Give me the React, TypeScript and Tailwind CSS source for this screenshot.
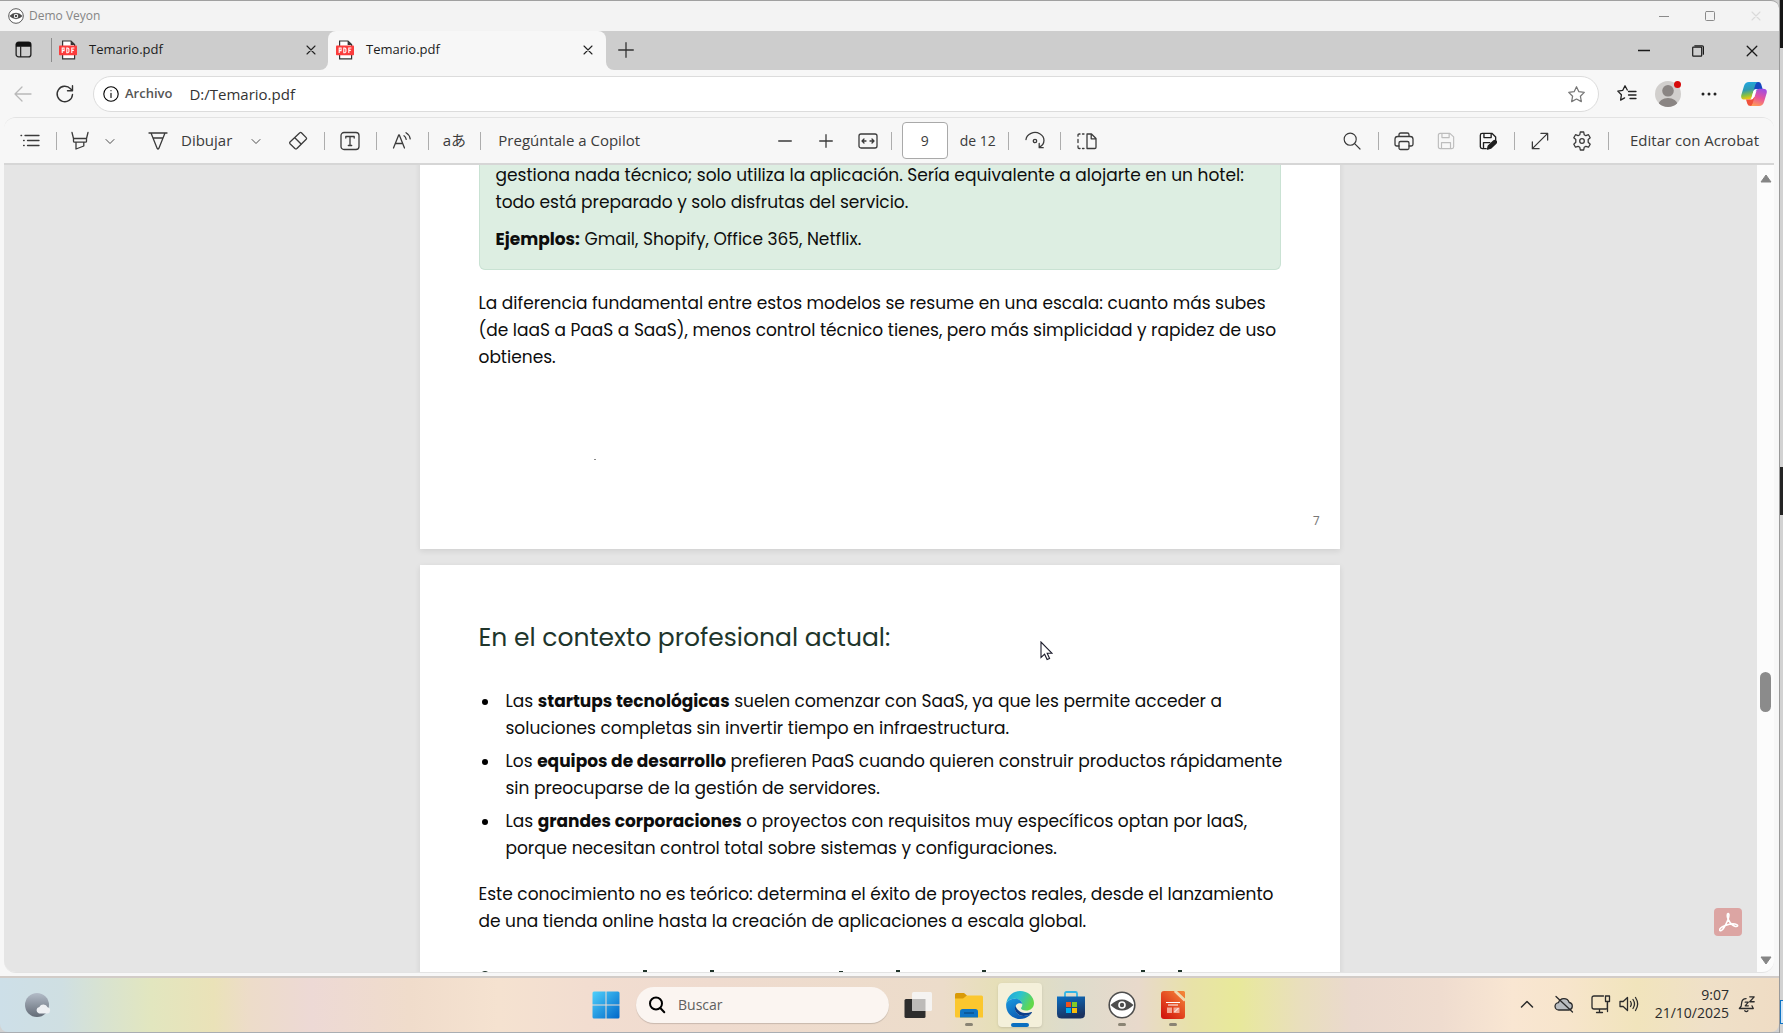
import type { ReactNode } from "react";

const strokeProps = {
  fill: "none",
  stroke: "currentColor",
  strokeLinecap: "round" as const,
  strokeLinejoin: "round" as const,
};

type IconProps = { children: ReactNode; size?: string; box?: string; width?: number };

function Icon({ children, size = "size-5", box = "0 0 20 20", width = 1.3 }: IconProps) {
  return (
    <svg viewBox={box} className={`${size} shrink-0`} strokeWidth={width} {...strokeProps} aria-hidden="true">
      {children}
    </svg>
  );
}

type ButtonProps = { label: string; children: ReactNode; className?: string; disabled?: boolean };

function IconButton({ label, children, className = "w-8", disabled }: ButtonProps) {
  return (
    <button
      type="button"
      aria-label={label}
      disabled={disabled}
      className={`flex h-8 shrink-0 items-center justify-center rounded ${className}`}
    >
      {children}
    </button>
  );
}

function Divider() {
  return (
    <span className="flex w-5 shrink-0 justify-center">
      <span className="h-[18px] w-px bg-[#adadad]" />
    </span>
  );
}

function EyeLogo({ size }: { size: string }) {
  return (
    <svg viewBox="0 0 28 28" className={size} aria-hidden="true">
      <circle cx="14" cy="14" r="12.8" fill="#fff" stroke="#4d4d4d" strokeWidth="1.6" />
      <path d="M2.5 14Q8 8.4 14 8.4T25.5 14Q20 19.6 14 19.6T2.5 14Z" fill="#4d4d4d" />
      <circle cx="14" cy="14" r="3.8" fill="#fff" />
      <circle cx="14" cy="14" r="2.2" fill="#4d4d4d" />
    </svg>
  );
}

function PdfIcon() {
  return (
    <svg viewBox="0 0 18 20" className="h-5 w-[18px] shrink-0" aria-hidden="true">
      <path d="M3.6 1H12l3.6 3.6V18.8H3.6Z" fill="#fff" stroke="#333" strokeWidth="1.2" />
      <path d="M11.6 1v4h4Z" fill="#333" />
      <rect x="0" y="5.6" width="18" height="9.6" rx=".8" fill="#fb3d3d" />
      <path
        d="M3.2 13V8h1.9v2.6H3.2M7.8 8v4.8h1.1l1-1V9l-1-1ZM12.8 13V8h2.6M12.8 10.4h2"
        fill="none"
        stroke="#fff"
        strokeWidth="1.1"
      />
    </svg>
  );
}

function CloseMark({ size = "size-3" }: { size?: string }) {
  return (
    <Icon size={size} box="0 0 12 12" width={1.3}>
      <path d="M1.2 1.2l9.6 9.6M10.8 1.2l-9.6 9.6" />
    </Icon>
  );
}

function Chevron() {
  return (
    <Icon size="size-2.5" box="0 0 10 10" width={0.9}>
      <path d="M1 3.500l4 4 4-4" />
    </Icon>
  );
}

function TitleBar() {
  return (
    <header className="flex h-[31px] shrink-0 items-center rounded-tr-lg border-t border-[#a0a0a0] bg-[#f3f3f3] pl-2">
      <EyeLogo size="size-4" />
      <span className="ml-[5px] text-xs text-[#858585]">Demo Veyon</span>
      <div className="ml-auto flex text-[#8a8a8a]">
        <IconButton label="Minimizar ventana" className="w-[46px]">
          <Icon size="size-2.5" box="0 0 10 10" width={1}><path d="M0 5.5h10" /></Icon>
        </IconButton>
        <IconButton label="Maximizar ventana" className="w-[46px]">
          <Icon size="size-2.5" box="0 0 10 10" width={1}><rect x=".5" y=".5" width="9" height="9" rx="1" /></Icon>
        </IconButton>
        <IconButton label="Cerrar ventana" className="w-[46px] text-[#dadada]">
          <CloseMark size="size-2.5" />
        </IconButton>
      </div>
    </header>
  );
}

function TabStrip() {
  return (
    <nav className="flex h-[39px] shrink-0 bg-[#f7f7f7]">
      <div className="flex w-[328px] shrink-0 items-center rounded-br-lg bg-[#cdcdcd] pb-0.5 pl-[7px]">
        <IconButton label="Menú de pestañas">
          <svg viewBox="0 0 18 18" className="size-[17px]" aria-hidden="true">
            <rect x="1.2" y="1.2" width="15.6" height="15.6" rx="2.6" fill="none" stroke="#222" strokeWidth="1.4" />
            <path d="M1 6V4a3 3 0 0 1 3-3h10a3 3 0 0 1 3 3v2Z" fill="#111" />
            <path d="M6 5v12" stroke="#222" strokeWidth="1.3" />
          </svg>
        </IconButton>
        <span className="ml-3 h-6 w-px bg-[#8c8c8c]" />
        <span className="ml-[7px]" />
        <PdfIcon />
        <span className="ml-3 text-[13px] text-[#1c1c1c]">Temario.pdf</span>
        <IconButton label="Cerrar pestaña" className="ml-auto w-[34px] text-[#222]">
          <CloseMark size="size-2.5" />
        </IconButton>
      </div>
      <div className="flex min-w-0 flex-1 bg-[#cdcdcd]">
        <div className="flex w-[278px] shrink-0 items-center rounded-t-lg bg-[#f7f7f7] pb-0.5 pl-2">
          <PdfIcon />
          <span className="ml-3 text-[13px] text-[#1c1c1c]">Temario.pdf</span>
          <IconButton label="Cerrar pestaña" className="ml-auto w-[37px] text-[#222]">
            <CloseMark size="size-2.5" />
          </IconButton>
        </div>
        <div className="flex flex-1 items-center bg-[#f7f7f7]">
          <div className="flex h-full flex-1 items-center rounded-bl-lg bg-[#cdcdcd] pl-1">
            <IconButton label="Nueva pestaña" className="mb-0.5 w-8 text-[#333]">
              <Icon size="size-4" box="0 0 16 16" width={1.3}><path d="M8 .7v14.6M.7 8h14.6" /></Icon>
            </IconButton>
            <div className="ml-auto flex text-[#1a1a1a]">
              <IconButton label="Minimizar" className="w-[54px]">
                <Icon size="size-3" box="0 0 12 12" width={1.3}><path d="M0 5.500h12" /></Icon>
              </IconButton>
              <IconButton label="Restaurar" className="w-[54px]">
                <Icon size="size-3" box="0 0 12 12" width={1.2}>
                  <rect x=".7" y="2.2" width="9" height="9" rx=".6" />
                  <path d="M2.8.8h7.4q1.2 0 1.2 1.2v7.2" />
                </Icon>
              </IconButton>
              <IconButton label="Cerrar" className="w-[54px]"><CloseMark /></IconButton>
            </div>
          </div>
        </div>
      </div>
    </nav>
  );
}

function CopilotLogo() {
  return (
    <svg viewBox="0 0 26 24" className="h-6 w-[26px]" aria-hidden="true">
      <defs>
        <linearGradient id="cpa" x1="0" y1="0" x2=".2" y2="1">
          <stop offset="0" stopColor="#1ea7e8" /><stop offset=".5" stopColor="#2f9bb0" />
          <stop offset=".8" stopColor="#8fc23c" /><stop offset="1" stopColor="#f2c414" />
        </linearGradient>
        <linearGradient id="cpb" x1=".6" y1="0" x2=".3" y2="1">
          <stop offset="0" stopColor="#a24de0" /><stop offset=".5" stopColor="#e8549a" /><stop offset="1" stopColor="#ff9a56" />
        </linearGradient>
      </defs>
      <path d="M15 0h2.500q2 0 2.700 2.300l1.400 4.700h-3.600q-2.200 0-2.900 2.200L11 9Z" fill="#1547c0" />
      <path d="M8 0h9q-1.800 0-2.600 2.600L10.600 15.400Q9.800 17.600 7.600 17.600H3.800Q-.6 17.600.3 13L3 4Q4.200 0 8 0Z" fill="url(#cpa)" />
      <path d="M11 24H9.500q-2.500-.1-3.200-2.300L5 17.600h3q2.200 0 2.900-2.200L15 15Z" fill="#f0523c" />
      <path d="M18 24H9q1.800 0 2.600-2.600L15.400 9q.8-2.200 3-2.200h3.800Q26.600 6.800 25.700 11L23 20q-1.200 4-5 4Z" fill="url(#cpb)" />
      <path d="M12.600 8.600q.6-1.600 2.300-1.700h1.600q-1.100.5-1.600 2.100l-2.200 6.800q-.6 1.600-2.300 1.700H9q1-.4 1.600-2.100Z" fill="#fff" />
    </svg>
  );
}

const starPath = "M10 1.800l2.500 5.200 5.700.8-4.100 4 1 5.700L10 14.800l-5.100 2.700 1-5.700-4.100-4 5.700-.8Z";

function AddressRow() {
  return (
    <div className="flex h-[47px] shrink-0 items-center bg-[#f7f7f7] pt-px pl-[7px]">
      <IconButton label="Atrás" disabled className="w-8 text-[#b9b9b9]">
        <Icon size="size-[18px]" box="0 0 18 18"><path d="M17 9H1M8 2L1 9l7 7" /></Icon>
      </IconButton>
      <IconButton label="Actualizar" className="ml-2.5 w-8 text-[#333]">
        <Icon size="size-5" width={1.4}><path d="M17.500 10.500A7.700 7.700 0 1 1 15.500 4.800L17.400 6.700M17.500 1.800v5h-5" /></Icon>
      </IconButton>
      <div className="ml-3 flex h-9 flex-1 items-center rounded-full border border-[#dcdcdc] bg-white pl-[9px]">
        <Icon size="size-4" box="0 0 16 16" width={1.1}><circle cx="8" cy="8" r="7.200" /><path d="M8 7.200v4.200M8 4.600v.2" /></Icon>
        <label htmlFor="address" className="ml-1.5 text-[13px] font-semibold text-[#555]">Archivo</label>
        <input
          id="address"
          defaultValue="D:/Temario.pdf"
          className="ml-[17px] min-w-0 flex-1 bg-transparent text-[15px] text-[#333] outline-none"
        />
        <IconButton label="Agregar a favoritos" className="mr-1.5 w-8 text-[#777]">
          <Icon size="size-[19px]" width={1.3}><path d={starPath} /></Icon>
        </IconButton>
      </div>
      <IconButton label="Favoritos" className="ml-3 w-8 text-[#222]">
        <Icon size="size-5" width={1.3}>
          <path d="M10.300 6L8 1.700 5.800 6.300.8 7.100l3.600 3.700-.8 5.300 4-2.200M11.500 7.500H19M11.500 11H19M13 14.500h6" />
        </Icon>
      </IconButton>
      <button type="button" aria-label="Perfil" className="relative ml-3 size-[26px] shrink-0 overflow-visible">
        <svg viewBox="0 0 26 26" className="size-full" aria-hidden="true">
          <clipPath id="avatarClip"><circle cx="13" cy="13" r="13" /></clipPath>
          <g clipPath="url(#avatarClip)">
            <rect width="26" height="26" fill="#d1cfcd" />
            <circle cx="13" cy="9.800" r="5.800" fill="#8a8583" />
            <ellipse cx="13" cy="23.500" rx="9.500" ry="6.500" fill="#8a8583" />
          </g>
        </svg>
        <span className="absolute top-0 right-0 size-[7px] rounded-full bg-[#d70a0a]" />
      </button>
      <IconButton label="Configuración y más" className="ml-3 w-8 text-[#222]">
        <svg viewBox="0 0 16 4" className="h-1 w-4" fill="currentColor" aria-hidden="true">
          <circle cx="2" cy="2" r="1.500" /><circle cx="8" cy="2" r="1.500" /><circle cx="14" cy="2" r="1.500" />
        </svg>
      </IconButton>
      <IconButton label="Copilot" className="mr-[9px] ml-[13px] w-8"><CopilotLogo /></IconButton>
    </div>
  );
}

function PdfToolbar() {
  return (
    <div className="flex h-[47px] shrink-0 items-center border-b-2 border-[#d6d6d6] bg-[#f7f7f7] pr-[15px] pl-2.5 text-[15px] text-[#3b3b3b]">
      <IconButton label="Índice">
        <Icon size="size-5"><path d="M5 4.500h14M7.500 9.500H19M7.500 14.500H19M1 4.500h.6M3.600 9.500h.6M3.600 14.500h.6" /></Icon>
      </IconButton>
      <Divider />
      <IconButton label="Resaltar" className="w-7">
        <Icon size="size-5"><path d="M2 1.500l1.500 6v2.700q0 1 1 1h11q1 0 1-1V7.500l1.500-6M3.500 7.500h13M6 11.200v6.800l7.800-3v-3.800" /></Icon>
      </IconButton>
      <IconButton label="Opciones de resaltado"><Chevron /></IconButton>
      <button type="button" className="ml-[22px] flex items-center gap-[13px]">
        <Icon size="size-5"><path d="M1 2h18M3 2l6.200 15.400q.8 1.200 1.600 0L17 2M5 7h10" /></Icon>
        <span>Dibujar</span>
      </button>
      <IconButton label="Opciones de dibujo" className="ml-2 w-8"><Chevron /></IconButton>
      <IconButton label="Borrar" className="ml-2.5 w-8">
        <Icon size="size-5"><path d="M11.800 1.800q.8-.8 1.600 0l4.800 4.800q.8.800 0 1.600l-9.300 9.300q-1 .8-2 0L2 12.800q-.8-.9 0-1.800ZM6.800 6.800l6.500 6.500" /></Icon>
      </IconButton>
      <Divider />
      <IconButton label="Agregar texto">
        <Icon size="size-5"><rect x="1" y="1.500" width="18" height="17" rx="3" /><path d="M5.800 7V5.500h8.400V7M10 5.500v9M8.300 14.500h3.400" /></Icon>
      </IconButton>
      <Divider />
      <IconButton label="Leer en voz alta">
        <Icon size="size-5"><path d="M1.500 17L6.700 4h.6l5.200 13M3.300 12.500h7.400M12 4.800q1.800 1.200 2.200 3.500M14 1.800q3.500 2 4.200 6" /></Icon>
      </IconButton>
      <Divider />
      <button type="button" className="w-8 shrink-0 font-['Open_Sans','Noto_Sans_CJK_JP',sans-serif] text-[15px]">aあ</button>
      <Divider />
      <button type="button" className="ml-2 whitespace-nowrap">Pregúntale a Copilot</button>
      <span className="grow" />
      <IconButton label="Alejar" className="ml-3 w-8"><Icon size="size-3.5" box="0 0 14 14"><path d="M.7 7h12.600" /></Icon></IconButton>
      <IconButton label="Acercar" className="ml-[9px] w-8"><Icon size="size-3.5" box="0 0 14 14"><path d="M.7 7h12.600M7 .7v12.600" /></Icon></IconButton>
      <IconButton label="Ajustar al ancho" className="ml-3 w-7">
        <Icon size="size-5"><rect x="1" y="3" width="18" height="14" rx="2" /><path d="M8 10H4.300M6 8l-2 2 2 2M12 10h3.700M14 8l2 2-2 2" /></Icon>
      </IconButton>
      <Divider />
      <input
        aria-label="Número de página"
        defaultValue="9"
        className="h-[37px] w-[46px] rounded-sm border border-[#a9a9a9] bg-white text-center text-sm outline-none"
      />
      <span className="ml-3 text-sm">de 12</span>
      <span className="ml-[3px]" />
      <Divider />
      <IconButton label="Girar">
        <Icon size="size-5"><path d="M1 8.500A9 7.800 0 1 1 14.600 16M14.200 12.500v4.200h4" /><circle cx="10" cy="10" r="1.700" /></Icon>
      </IconButton>
      <Divider />
      <IconButton label="Vista de página">
        <Icon size="size-5"><path d="M10 3h4.500L19 7.500v8.800q0 1.200-1.200 1.200H10ZM14.200 3v4.800H19M7 3H5.500M3 3H2.200Q1 3 1 4.200v1M1 8.500v3M1 14.800v1.500q0 1.200 1.200 1.200H3M5.500 17.500H7" /></Icon>
      </IconButton>
      <span className="grow-[2]" />
      <IconButton label="Buscar">
        <Icon size="size-[18px]"><circle cx="8" cy="8" r="6.700" /><path d="M12.900 12.900l6 6" /></Icon>
      </IconButton>
      <Divider />
      <IconButton label="Imprimir">
        <Icon size="size-5"><path d="M5 5.500V3.700Q5 2 6.700 2h6.600Q15 2 15 3.700v1.800M5 15H2.800Q1 15 1 13.200V8.300Q1 5.500 3.800 5.500h12.400Q19 5.500 19 8.300v4.900q0 1.800-1.800 1.800H15" /><rect x="5" y="10.500" width="10" height="8" rx="1.500" /></Icon>
      </IconButton>
      <IconButton label="Guardar" disabled className="ml-2.5 w-8 text-[#bdbdbd]">
        <Icon size="size-[18px]"><path d="M3.500 1.500h10.800L18.500 5.500v11q0 2-2 2h-13q-2 0-2-2v-13q0-2 2-2ZM5.500 1.500v4.700h8V1.500M5 18.500v-6.700h10v6.700" /></Icon>
      </IconButton>
      <IconButton label="Guardar como" className="ml-2.5 w-8 text-[#1f1f1f]">
        <Icon size="size-[18px]" width={1.5}>
          <path d="M8 18.500H3.500q-2 0-2-2v-13q0-2 2-2h10.800L18.500 5.500v3M5.500 1.500v4.700h8V1.500M5 18.500v-6.700h7" />
          <path d="M9.500 19l.8-3.500 6.200-5.800q1.400-.9 2.400.2t0 2.500L13 18Z" fill="currentColor" />
        </Icon>
      </IconButton>
      <Divider />
      <IconButton label="Pantalla completa">
        <Icon size="size-[18px]" width={1.4}><path d="M1.500 18.500l17-17M11 1.500h7.500V9M1.500 11v7.500H9" /></Icon>
      </IconButton>
      <IconButton label="Configuración" className="ml-2.5 w-8">
        <Icon size="size-5">
          <path d="M8.300 1h3.400l.5 2.700 1.700 1 2.600-1 1.700 3-2 1.800v2.800l2 1.900-1.700 3-2.600-.9-1.700 1-.5 2.700H8.300l-.5-2.700-1.700-1-2.600.9-1.700-3 2-1.900V8.500l-2-1.800 1.700-3 2.600 1 1.700-1Z" />
          <circle cx="10" cy="10" r="2.300" />
        </Icon>
      </IconButton>
      <Divider />
      <button type="button" className="ml-3 whitespace-nowrap">Editar con Acrobat</button>
    </div>
  );
}

const bullet =
  "relative before:absolute before:top-[11px] before:-left-6 before:size-1.5 before:rounded-full before:bg-black before:content-['']";

function Document() {
  return (
    <main className="-mt-4 mx-auto flex w-[920px] flex-col gap-4 text-[17px] leading-[27px] whitespace-nowrap text-[#0d0d0d] font-['Poppins','Inter',sans-serif]">
      <article className="relative h-[400px] shrink-0 bg-white px-[59px] shadow-[0_2px_6px_#00000018]">
        <section className="rounded-b-md border border-t-0 border-[#c9e2d3] bg-[#ddeee2] px-4 pt-[13px] pb-4">
          <p>
            gestiona nada técnico; solo utiliza la aplicación. Sería equivalente a alojarte en un hotel:
            <br />
            todo está preparado y solo disfrutas del servicio.
          </p>
          <p className="mt-2.5"><strong>Ejemplos:</strong> Gmail, Shopify, Office 365, Netflix.</p>
        </section>
        <p className="mt-5">
          La diferencia fundamental entre estos modelos se resume en una escala: cuanto más subes
          <br />
          (de IaaS a PaaS a SaaS), menos control técnico tienes, pero más simplicidad y rapidez de uso
          <br />
          obtienes.
        </p>
        <span className="absolute bottom-[89px] left-[174px] h-px w-0.5 bg-[#888]" />
        <span className="absolute right-5 bottom-[15px] text-xs leading-[27px] text-[#777]">7</span>
      </article>
      <article className="relative h-[460px] shrink-0 bg-white px-[59px] pt-[55px] shadow-[0_2px_6px_#00000018]">
        <h2 className="text-[25px] leading-9 text-[#20352b]">En el contexto profesional actual:</h2>
        <ul className="mt-8 flex flex-col gap-1.5 pl-[27px]">
          <li className={bullet}>
            Las <strong>startups tecnológicas</strong> suelen comenzar con SaaS, ya que les permite acceder a
            <br />
            soluciones completas sin invertir tiempo en infraestructura.
          </li>
          <li className={bullet}>
            Los <strong>equipos de desarrollo</strong> prefieren PaaS cuando quieren construir productos rápidamente
            <br />
            sin preocuparse de la gestión de servidores.
          </li>
          <li className={bullet}>
            Las <strong>grandes corporaciones</strong> o proyectos con requisitos muy específicos optan por IaaS,
            <br />
            porque necesitan control total sobre sistemas y configuraciones.
          </li>
        </ul>
        <p className="mt-[19px]">
          Este conocimiento no es teórico: determina el éxito de proyectos reales, desde el lanzamiento
          <br />
          de una tienda online hasta la creación de aplicaciones a escala global.
        </p>
        {/* Upper tips of the next heading, cut off by the viewer's lower edge */}
        <svg viewBox="0 0 802 4" className="absolute top-[405px] left-[59px] h-1 w-[802px]" fill="#20352b" aria-hidden="true">
          <path d="M164 0h4v4h-4ZM231 0h4v4h-4ZM417 0h4v4h-4ZM503 0h4v4h-4ZM662 0h4v4h-4ZM699 0h4v4h-4ZM3 2q3-2 6 0v1H3ZM360 1h4v2h-4Z" />
        </svg>
        <svg viewBox="0 0 13 20" className="absolute top-[76px] left-[620px] h-5 w-[13px]" aria-hidden="true">
          <path d="M1 1v15.500l3.600-3.300 2.500 5.400 2.500-1.200-2.400-5.100h4.900Z" fill="#fff" stroke="#1b1b2b" strokeWidth="1.100" />
        </svg>
      </article>
    </main>
  );
}

function Viewer() {
  return (
    <div className="relative flex min-h-0 flex-1 bg-[#e5e5e5]">
      <div className="min-w-0 flex-1 overflow-hidden pr-0.5">
        <Document />
      </div>
      <div className="flex w-[17px] shrink-0 flex-col items-center bg-[#fcfcfc] pt-[9px] pb-[7px]">
        <svg viewBox="0 0 12 9" className="h-[9px] w-3" aria-hidden="true"><path d="M6 1l5 7H1Z" fill="#858585" stroke="#858585" strokeLinejoin="round" /></svg>
        <span className="grow-[2]" />
        <span className="h-10 w-[11px] rounded-full bg-[#8b8b8b]" />
        <span className="grow" />
        <svg viewBox="0 0 12 9" className="h-[9px] w-3" aria-hidden="true"><path d="M6 8L1 1h10Z" fill="#858585" stroke="#858585" strokeLinejoin="round" /></svg>
      </div>
      <button
        type="button"
        aria-label="Abrir en Acrobat"
        className="absolute right-8 bottom-9 flex size-7 items-center justify-center rounded bg-[#dca5a3]"
      >
        <svg viewBox="0 0 20 20" className="size-[21px]" fill="none" stroke="#fff" strokeWidth="1.500" aria-hidden="true">
          <path d="M9.600 1.500c-1.300.5-.9 3.300.3 5.800 1.400 3 4 5.600 6.600 6.400 2 .6 3-.9 1.400-1.700-2-1-7-.7-11 .8-3.200 1.200-5.600 3-5.300 4.500.3 1.200 2.200.7 4-2.300 2.300-3.800 4.600-9.200 4.800-11.600.1-1.200-.2-2-.8-1.900Z" />
        </svg>
      </button>
    </div>
  );
}

function TaskItem({ label, children, running, active }: { label: string; children: ReactNode; running?: boolean; active?: boolean }) {
  return (
    <button
      type="button"
      aria-label={label}
      className={`relative flex h-11 w-11 shrink-0 items-center justify-center rounded ${active ? "bg-[#f4f0da] shadow-sm" : ""}`}
    >
      {children}
      {running && <span className="absolute bottom-px h-[3px] w-2 rounded-full bg-[#8a8474]" />}
      {active && <span className="absolute bottom-0 h-1 w-[18px] rounded-full bg-[#0a6fc0]" />}
    </button>
  );
}

function Taskbar() {
  return (
    <footer className="grid h-14 shrink-0 grid-cols-[1fr_auto_1fr] items-center rounded-b-lg border-t-2 border-[#d2ccc8] bg-[linear-gradient(90deg,#cddfe8_0%,#cfdfe2_3.500%,#d9e3cf_6%,#e2e6bf_8.500%,#eae2b8_12%,#eddcc9_14%,#edd9d5_17.500%,#f0dccb_23%,#f5e2d0_28%,#f2ddd0_33%,#efdbcf_40%,#ecdcca_53%,#e6dfb8_56%,#dddccc_60%,#e8d9cb_64%,#e8e2a8_67%,#e8e99a_69.500%,#e9dfbc_73%,#ead9ce_76%,#efdccf_81%,#f9e6d2_85%,#f7e5cc_88%,#f1e4bc_92%,#efe0c8_96%,#efdcc4_100%)]">
      <button type="button" aria-label="Tiempo" className="ml-6 size-7">
        <svg viewBox="0 0 28 28" className="size-full" aria-hidden="true">
          <defs><linearGradient id="moon" x2="0" y2="1"><stop stopColor="#b3bcc8" /><stop offset="1" stopColor="#636b76" /></linearGradient></defs>
          <circle cx="13" cy="14" r="12" fill="url(#moon)" />
          <path d="M15 22.500a3.400 3.400 0 0 1 .3-6.600 4.600 4.600 0 0 1 8.300.3 3.200 3.200 0 0 1-.2 6.300Z" fill="#eef0f3" />
        </svg>
      </button>
      <div className="flex items-center gap-[7px]">
        <TaskItem label="Inicio">
          <svg viewBox="0 0 28 28" className="size-7" aria-hidden="true">
            <defs><linearGradient id="win" x2="1" y2="1"><stop stopColor="#4fd0fb" /><stop offset="1" stopColor="#0067c9" /></linearGradient></defs>
            <path d="M2 .5h11.500v13H.500V2Q.5.500 2 .5ZM14.500.5H26q1.500 0 1.500 1.500v11.500h-13ZM.5 14.500h13v13H2q-1.500 0-1.500-1.500ZM14.500 14.500h13V26q0 1.500-1.500 1.500H14.500Z" fill="url(#win)" />
          </svg>
        </TaskItem>
        <label className="ml-px flex h-9 w-[253px] shrink-0 items-center rounded-full bg-[#fbf5f1] pl-3 shadow-[0_1px_1px_#0000002a]">
          <Icon size="size-[18px]" box="0 0 18 18" width={2}><circle cx="8" cy="7.500" r="6" /><path d="M12.300 12l4 4.300" /></Icon>
          <input aria-label="Buscar" placeholder="Buscar" className="ml-3 min-w-0 flex-1 bg-transparent text-sm outline-none placeholder:text-[#606060]" />
        </label>
        <TaskItem label="Vista de tareas">
          <svg viewBox="0 0 28 28" className="size-7" aria-hidden="true">
            <rect x=".5" y="8" width="21" height="19" rx="1.500" fill="#2d2d2d" />
            <rect x="8" y="1" width="20" height="19" rx="1.500" fill="#f5f3f1" />
            <path d="M8 8h13.500v12H9.500Q8 20 8 18.500Z" fill="#bdbbb9" />
          </svg>
        </TaskItem>
        <TaskItem label="Explorador de archivos" running>
          <svg viewBox="0 0 28 28" className="size-7" aria-hidden="true">
            <path d="M0 8V3.500Q0 2 1.500 2H9l3 2.500L9 8Z" fill="#d99a07" />
            <path d="M0 7.500h8L12 4.500h14.500Q28 4.500 28 6v20.500H1.500Q0 26.500 0 25Z" fill="#fbc72e" />
            <path d="M5 26.500v-5.800Q5 18 7.700 18h12.600q2.700 0 2.700 2.700v5.800Z" fill="#0f74c4" />
            <path d="M9 22h10" stroke="#0a4c87" strokeWidth="1.300" />
          </svg>
        </TaskItem>
        <TaskItem label="Microsoft Edge" active>
          <svg viewBox="0 0 28 28" className="size-7" aria-hidden="true">
            <defs>
              <linearGradient id="edgeTop" x2="1" y2=".4"><stop stopColor="#1fa0df" /><stop offset=".5" stopColor="#2bc2cf" /><stop offset="1" stopColor="#62d84b" /></linearGradient>
              <linearGradient id="edgeLow" x2=".6" y2="1"><stop stopColor="#1b9be0" /><stop offset="1" stopColor="#0a56b0" /></linearGradient>
            </defs>
            <path d="M.2 12.500C1.200 5 7 0 14 0c8 0 14 5.600 14 12 0 4.600-3.600 7.600-8 7.600-3.200 0-5-1.200-5-2.300 0-.8 1.300-1.300 1.300-3.600 0-3.400-3.200-6-7.300-6C4.800 7.700 1.500 9.700.2 12.500Z" fill="url(#edgeTop)" />
            <path d="M.2 12.500C1.500 9.700 4.800 7.700 9 7.700c4 0 6.900 2.300 7.300 5.200-1-1-4.200-1.200-6 .8-2 2.300-1.500 6.300 1 8.800 3.700 3.700 9.300 2.800 13.700.2-2.500 3.500-6.500 5.300-11 5.300C6.300 28-.8 21.500.2 12.500Z" fill="url(#edgeLow)" />
            <path d="M9.600 14.500c-1.300 2.600-.7 5.800 1.700 8 3.700 3.700 9.300 2.800 13.700.2 1-.6 1.300-1.600.4-1.600-7 2.500-14.600-.4-15.800-6.600Z" fill="#0b3f8c" />
          </svg>
        </TaskItem>
        <TaskItem label="Microsoft Store">
          <svg viewBox="0 0 28 28" className="size-7" aria-hidden="true">
            <defs><linearGradient id="store" x2=".3" y2="1"><stop stopColor="#0b6fc2" /><stop offset="1" stopColor="#1a3260" /></linearGradient></defs>
            <path d="M8 7V2.500Q8 1 9.500 1h9Q20 1 20 2.500V7" fill="none" stroke="#31b5e6" strokeWidth="1.800" />
            <path d="M0 5.500h28V23q0 4.500-4.500 4.500h-19Q0 27.500 0 23Z" fill="url(#store)" />
            <path d="M9 11h5v5H9Z" fill="#f1511b" /><path d="M15 11h5v5h-5Z" fill="#80cc28" />
            <path d="M9 17h5v5H9Z" fill="#00adef" /><path d="M15 17h5v5h-5Z" fill="#fbbc09" />
          </svg>
        </TaskItem>
        <TaskItem label="Veyon" running><EyeLogo size="size-7" /></TaskItem>
        <TaskItem label="Impress" running>
          <svg viewBox="0 0 24 28" className="h-7 w-6" aria-hidden="true">
            <defs><linearGradient id="impress" x1="1" x2=".2" y2="1"><stop stopColor="#f58b3c" /><stop offset=".6" stopColor="#e2441f" /><stop offset="1" stopColor="#d2180f" /></linearGradient></defs>
            <path d="M3 0h10l11 10v15q0 3-3 3H3q-3 0-3-3V3Q0 0 3 0ZM16 0h7l1 1v6.500Z" fill="url(#impress)" />
            <path d="M13.500.5L23.500 10" stroke="#f8d5b2" strokeWidth="1.500" />
            <path d="M5 11.500h14M7 14h10" stroke="#fff" strokeWidth="1.100" />
            <path d="M6 16.500h5V22H6ZM12.500 16.500h6V22h-6Z" fill="#f4a894" />
            <path d="M13.500 21l4-4" stroke="#fff" />
          </svg>
        </TaskItem>
      </div>
      <div className="flex items-center justify-end pr-[22px] pb-[3px] text-[#2b2b2b]">
        <IconButton label="Mostrar iconos ocultos"><Icon size="size-3.5" box="0 0 14 14" width={1.500}><path d="M1.500 10L7 4.500l5.500 5.500" /></Icon></IconButton>
        <IconButton label="OneDrive sin conexión" className="ml-[5px] w-8">
          <Icon size="size-5"><path d="M5 16a3.700 3.700 0 0 1-.5-7.400A5.600 5.600 0 0 1 15.200 8.500 3.800 3.800 0 0 1 15 16Z" fill="#b9bcc0" /><path d="M2 2.500l16.500 15.500" /></Icon>
        </IconButton>
        <IconButton label="Red" className="ml-[5px] w-8">
          <Icon size="size-5"><path d="M12.500 2H3Q1 2 1 4v9q0 2 2 2h12q1.300 0 1.300-1.200V9M5.500 18.500h6M8.500 15v3.500M14.500 2h4v5.500h-4ZM16.500 7.500v10" /></Icon>
        </IconButton>
        <IconButton label="Volumen" className="w-6">
          <Icon size="size-5"><path d="M1 7.500v5h3.200L8.500 16.500v-13L4.200 7.500ZM11.500 7.500q1.600 2.500 0 5M14 5.500q3 4.500 0 9M16.500 3.500q4.300 6.500 0 13" /></Icon>
        </IconButton>
        <time className="ml-3.5 text-right text-sm leading-[18px]">9:07<br />21/10/2025</time>
        <IconButton label="Notificaciones" className="ml-2 w-5">
          <Icon size="size-[18px]" width={1.400}>
            <path d="M9 4Q4.500 4 4 9l-.5 3.500-2 2.500h15.500l-1.500-3M7.500 17.500q1.700 1.800 3.500 0M13 2h5l-5 5.500h5M8 8h3.500L8 12h3.500" />
          </Icon>
        </IconButton>
      </div>
    </footer>
  );
}

export default function App() {
  return (
    <div className="flex h-screen overflow-hidden bg-[#d2d2d2] font-['Open_Sans',sans-serif]">
      <div className="flex min-w-0 flex-1 flex-col border-b border-[#a9adb2]">
        <TitleBar />
        <TabStrip />
        <AddressRow />
        <div className="flex min-h-0 flex-1 flex-col bg-[#f7f7f7] pr-[5px] pb-[3px] pl-1">
          <div className="flex min-h-0 flex-1 flex-col overflow-hidden rounded-xl border border-x-0 border-[#e3e3e3]">
            <PdfToolbar />
            <Viewer />
          </div>
        </div>
        <Taskbar />
      </div>
      <aside className="flex w-1 shrink-0 flex-col border-l border-[#9a9a9a]" aria-hidden="true">
        <div className="h-12 bg-[#161616]" />
        <div className="h-[419px]" />
        <div className="h-12 bg-[#232323]" />
        <div className="flex-1" />
        <div className="mb-[9px] h-6 border border-r-0 border-[#0f74c4] bg-[#d6e6f4]" />
      </aside>
    </div>
  );
}
